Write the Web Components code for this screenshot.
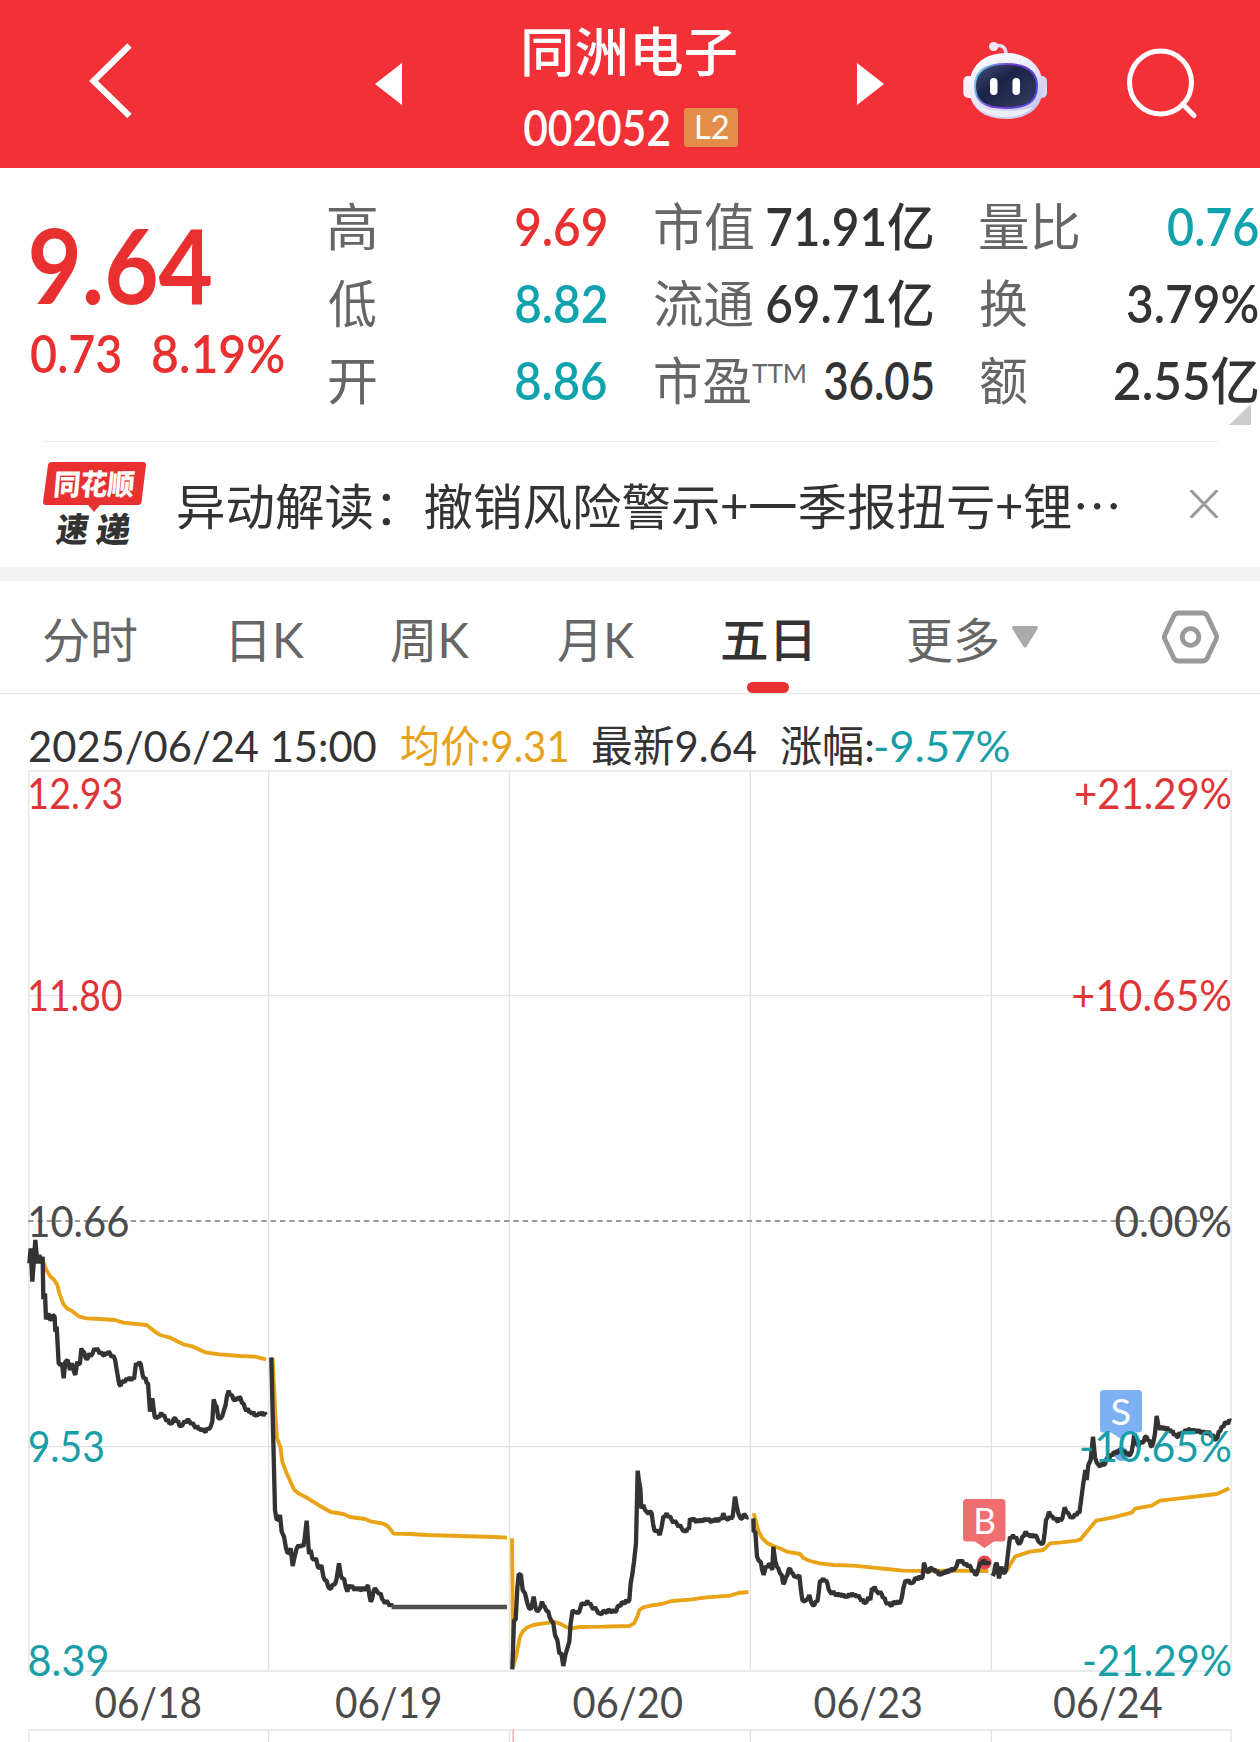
<!DOCTYPE html>
<html lang="zh-CN">
<head>
<meta charset="utf-8">
<title>同洲电子 002052</title>
<style>
    body {
        margin: 0;
        width: 1260px;
        height: 1742px;
        overflow: hidden;
        background: #fff;
        color: #333;
        font-family: Lato, "Noto Sans CJK SC", sans-serif;
    }
</style>
</head>
<body>
<stock-app></stock-app>

<script>
const FAMILY = 'Lato, "Noto Sans CJK SC", sans-serif';
const CJK_FAMILY = '"Noto Sans CJK SC", sans-serif';
const RED = '#e93030';
const TEAL = '#10a2ad';
const ctx = document.createElement('canvas').getContext('2d');

// svg <text> whose ink starts at x, ends at x + width and sits on the baseline y
function inkText (text, x, y, width, size, weight, fill, family = FAMILY) {
    ctx.font = `${weight} ${size}px ${family}`;
    const m = ctx.measureText(text);
    const scale = width / (m.actualBoundingBoxRight + m.actualBoundingBoxLeft);
    const left = x + m.actualBoundingBoxLeft * scale;
    // the unit after a figure is a step lighter than its digits
    const body = text.replace('亿', '<tspan font-weight="500">亿</tspan>');
    return `<text transform="translate(${left} ${y}) scale(${scale} 1)" font-family='${family}'
        font-size="${size}" font-weight="${weight}" fill="${fill}">${body}</text>`;
}

// One run of text fitted to a width; the bottom of the box is the baseline
class FitText extends HTMLElement {
    connectedCallback () {
        const width = +this.getAttribute('w');
        const size = +this.getAttribute('size');
        const weight = this.getAttribute('weight') || 400;
        const family = this.hasAttribute('cjk') ? CJK_FAMILY : FAMILY;
        const height = Math.round(size * 0.72);
        const root = this.attachShadow({ mode: 'open' });
        root.innerHTML = `
<style>
    :host { display: block; flex: none; width: ${width}px; height: ${height}px; }
    svg { display: block; overflow: visible; }
</style>
<svg width="${width}" height="${height}">${inkText(this.getAttribute('text'), 0, height, width, size, weight, 'currentColor', family)}</svg>`;
    }
}

class StockHeader extends HTMLElement {
    constructor () {
        super();
        this.attachShadow({ mode: 'open' }).innerHTML = `
<style>
    :host {
        display: flex;
        height: 168px;
        background: #f23037;
        color: #fff;
    }
    svg { display: block; flex: none; }
    .back { margin: 42px 0 0 86px; }
    .prev { margin: 63px 0 0 239px; }
    .title { width: 214px; margin-left: 122px; }
    .next { margin: 63px 0 0 119px; }
    .robot { margin: 40px 0 0 78px; }
    .search { margin: 46px 0 0 76px; }
</style>
<svg class="back" width="50" height="80" viewBox="86 42 50 80">
    <path d="M129.500 47 93.500 82 129.500 117.500" fill="none" stroke="#b8262c" stroke-width="6" opacity=".5"/>
    <path d="M129.500 45.500 93.500 81 129.500 116" fill="none" stroke="#fff" stroke-width="6.200"/>
</svg>
<svg class="prev" width="27" height="42"><path d="M27 0v42L0 21z" fill="#fff"/></svg>
<div class="title"><slot></slot></div>
<svg class="next" width="27" height="42"><path d="M0 0v42L27 21z" fill="#fff"/></svg>
<svg class="robot" width="86" height="82" viewBox="962 40 86 82">
    <defs>
        <linearGradient id="shell" x1="0" y1="0" x2=".7" y2="1">
            <stop offset="0" stop-color="#fff"/><stop offset=".5" stop-color="#ecebfa"/><stop offset="1" stop-color="#c3c5ec"/>
        </linearGradient>
        <linearGradient id="rim" x1="0" y1=".2" x2="1" y2=".5">
            <stop offset="0" stop-color="#69d7ef"/><stop offset=".45" stop-color="#7a3bd0"/><stop offset="1" stop-color="#5847e0"/>
        </linearGradient>
        <linearGradient id="face" x1="0" y1="0" x2="1" y2="1">
            <stop offset="0" stop-color="#46527e"/><stop offset=".4" stop-color="#1a2347"/><stop offset="1" stop-color="#373c63"/>
        </linearGradient>
    </defs>
    <path d="M994 46c8-2 12 1 12 9" fill="none" stroke="#e4dff5" stroke-width="3.500"/>
    <circle cx="993.600" cy="46.500" r="4.600" fill="#eeeafa"/>
    <rect x="963.300" y="76" width="12" height="22" rx="5" fill="#f3f2fc"/>
    <rect x="1035" y="76" width="12" height="22" rx="5" fill="#d6d6f4"/>
    <path d="M1006 53c23 0 37 14 37 34s-14 32-37 32-37-12-37-32 14-34 37-34z" fill="url(#shell)"/>
    <path d="M979 107c7 8 17 10 27 10s20-2 27-10c-8 3-17 4-27 4s-19-1-27-4z" fill="#f6f5fe" opacity=".8"/>
    <path d="M1006 64c19 0 31 6 31 22s-10 22-31 22-31-6-31-22 12-22 31-22z" fill="url(#face)" stroke="url(#rim)" stroke-width="2"/>
    <rect x="990" y="78" width="7.500" height="17" rx="3.700" fill="#fff"/>
    <rect x="1012.500" y="78" width="7.500" height="17" rx="3.700" fill="#fff"/>
</svg>
<svg class="search" width="74" height="74" viewBox="1124 46 74 74">
    <ellipse cx="1160.500" cy="82.500" rx="31" ry="31.500" fill="none" stroke="#fff" stroke-width="5"/>
    <path d="M1182.500 104 1194 115.500" stroke="#fff" stroke-width="5" stroke-linecap="round"/>
</svg>`;
    }
}

class StockTitle extends HTMLElement {
    constructor () {
        super();
        this.attachShadow({ mode: 'open' }).innerHTML = `
<style>
    :host { display: block; padding-top: 34px; }
    .code { display: flex; align-items: flex-end; margin-top: 36px; }
    .badge {
        box-sizing: border-box;
        width: 54px;
        height: 39px;
        margin: 0 0 -1px 15px;
        padding: 8px 0 0 12px;
        border-radius: 3px;
        background: #e48d49;
    }
</style>
<fit-text text="同洲电子" w="212" size="53" weight="500"></fit-text>
<div class="code">
    <fit-text text="002052" w="145" size="49" weight="600"></fit-text>
    <div class="badge"><fit-text text="L2" w="32" size="32"></fit-text></div>
</div>`;
    }
}

// label on the left, figure on the right, sharing a baseline
class QuoteItem extends HTMLElement {
    connectedCallback () {
        const a = name => this.getAttribute(name);
        this.attachShadow({ mode: 'open' }).innerHTML = `
<style>
    :host { display: flex; align-items: flex-end; justify-content: space-between; height: 38px; }
    .label { color: #666; }
    .value { color: ${a('color') || '#333'}; }
</style>
<fit-text class="label" text="${a('label')}" w="${a('lw')}" size="51"></fit-text>
<slot></slot>
<fit-text class="value" text="${a('value')}" w="${a('vw')}" size="51" weight="600"></fit-text>`;
    }
}

class QuotePanel extends HTMLElement {
    constructor () {
        super();
        this.attachShadow({ mode: 'open' }).innerHTML = `
<style>
    :host { display: block; height: 274px; overflow: hidden; }
    .cols { display: flex; height: 273px; }
    .now { width: 253px; margin-left: 31px; padding-top: 61px; color: ${RED}; }
    .diff { display: flex; justify-content: space-between; margin-top: 32px; }
    .col { display: flex; flex-direction: column; gap: 39px; padding-top: 40px; }
    .c1 { width: 277px; margin-left: 45px; }
    .c2 { width: 278px; margin-left: 49px; }
    .c3 { width: 278px; margin-left: 47px; }
    .ttm { align-self: flex-start; margin: 2px 17px 0 0; color: #666; }
    .corner { margin: 236px 0 0 -29px; }
    .line { height: 1px; margin: 0 42px; background: #ececec; }
</style>
<div class="cols">
    <div class="now">
        <fit-text text="9.64" w="180" size="104" weight="700"></fit-text>
        <div class="diff">
            <fit-text text="0.73" w="89" size="51" weight="600"></fit-text>
            <fit-text text="8.19%" w="131" size="51" weight="600"></fit-text>
        </div>
    </div>
    <div class="col c1">
        <quote-item label="高" lw="47" value="9.69" vw="90" color="${RED}"></quote-item>
        <quote-item label="低" lw="47" value="8.82" vw="90" color="${TEAL}"></quote-item>
        <quote-item label="开" lw="47" value="8.86" vw="90" color="${TEAL}"></quote-item>
    </div>
    <div class="col c2">
        <quote-item label="市值" lw="98" value="71.91亿" vw="166"></quote-item>
        <quote-item label="流通" lw="98" value="69.71亿" vw="166"></quote-item>
        <quote-item label="市盈" lw="95" value="36.05" vw="109"><fit-text class="ttm" text="TTM" w="53" size="27"></fit-text></quote-item>
    </div>
    <div class="col c3">
        <quote-item label="量比" lw="99" value="0.76" vw="90" color="${TEAL}"></quote-item>
        <quote-item label="换" lw="47" value="3.79%" vw="131"></quote-item>
        <quote-item label="额" lw="47" value="2.55亿" vw="143"></quote-item>
    </div>
    <svg class="corner" width="22" height="21"><path d="M22 0v21H0z" fill="#ccc"/></svg>
</div>
<div class="line"></div>`;
    }
}

class NewsBar extends HTMLElement {
    constructor () {
        super();
        this.attachShadow({ mode: 'open' }).innerHTML = `
<style>
    :host { display: flex; height: 125px; border-bottom: 14px solid #f4f4f4; }
    .logo { margin: 18px 0 0 42px; overflow: visible; }
    .close { margin: 48px 0 0 72px; }
</style>
<svg class="logo" width="106" height="88" viewBox="42 460 106 88">
    <path d="M52 462h91q3 0 3 3l-4.500 37q-.5 3-3.500 3h-38l-6 7-6-7H46q-3 0-3-3l5-37q.5-3 4-3z" fill="${RED}"/>
    <g transform="translate(97 0) skewX(-5)">${inkText('同花顺', 0, 495, 80, 29, 900, '#fff')}</g>
    <g transform="translate(131 0) skewX(-8)">${inkText('速', 0, 541.5, 32, 34, 900, '#333')}${inkText('递', 40, 541.5, 34, 34, 900, '#333')}</g>
</svg>
<slot></slot>
<svg class="close" width="28" height="28"><path d="M1.500 1 26.500 27M26.500 1 1.500 27" stroke="#999" stroke-width="3" stroke-linecap="round"/></svg>`;
    }
}

class TabItem extends HTMLElement {
    connectedCallback () {
        const active = this.hasAttribute('active');
        this.attachShadow({ mode: 'open' }).innerHTML = `
<style>
    :host { display: flex; flex-direction: column; align-items: center; color: ${active ? '#333' : '#666'}; }
    i { display: ${active ? 'block' : 'none'}; width: 42px; height: 11px; margin: 25px 0 0 3px; border-radius: 5.500px; background: ${RED}; }
</style>
<fit-text text="${this.getAttribute('text')}" w="${this.getAttribute('w')}" size="${active ? 47 : 48}" weight="${active ? 500 : 400}"></fit-text>
<i></i>`;
    }
}

class TabBar extends HTMLElement {
    constructor () {
        super();
        this.attachShadow({ mode: 'open' }).innerHTML = `
<style>
    :host {
        display: flex;
        align-items: flex-start;
        box-sizing: border-box;
        height: 113px;
        padding: 42px 41px 0 44px;
        border-bottom: 1px solid #e6e6e6;
    }
    .arrow { margin: 3px 0 0 14px; }
    .settings { margin: -13px 0 0 auto; }
</style>
<slot></slot>
<svg class="arrow" width="26" height="22"><path d="M2 0h22q3 0 1.500 3L15 20q-2 3-4 0L.5 3Q-1 0 2 0z" fill="#aaa"/></svg>
<svg class="settings" width="57" height="54" viewBox="1161.500 609.500 57 54">
    <path d="M1178 612.500h24q3 0 4.500 2.500l9 19q1.200 2.500 0 5l-9 19q-1.500 2.500-4.500 2.500h-24q-3 0-4.500-2.500l-9-19q-1.200-2.500 0-5l9-19q1.500-2.500 4.500-2.500z" fill="none" stroke="#999" stroke-width="4.800"/>
    <circle cx="1190" cy="636.500" r="8.300" fill="none" stroke="#999" stroke-width="4.800"/>
</svg>`;
    }
}

class InfoLine extends HTMLElement {
    constructor () {
        super();
        this.attachShadow({ mode: 'open' }).innerHTML = `
<style>
    :host { display: flex; height: 69px; box-sizing: border-box; padding: 37px 0 0 30px; }
</style>
<slot></slot>`;
    }
}

// Traced points of each day, three units to a pixel, from the day's own origin
const DAYS = [
    {
        x: 0, y: 1200,
        price: '88,190 92,145 97,245 101,190 106,120 112,190 118,165 124,190 128,170 130,298 135,280 138,358 145,340 150,360 158,345 164,350 166,395 170,380 176,490 186,490 191,535 196,485 203,480 210,510 216,490 226,525 232,485 240,490 244,445 252,455 260,478 268,460 272,468 283,445 295,452 308,465 318,458 330,460 345,478 352,520 358,555 370,545 380,535 402,538 408,490 422,492 428,525 444,550 450,635 457,595 464,650 474,650 484,638 496,655 512,670 526,655 542,678 553,663 568,663 583,678 600,685 612,693 626,688 637,665 641,598 650,620 655,655 662,655 672,630 686,572 700,598 722,595 735,625 752,635 768,645 778,638 798,645',
        avg: '128,180 138,208 150,228 163,240 172,255 178,280 190,312 202,326 215,332 238,350 260,355 300,357 345,360 370,368 440,375 465,395 480,405 510,413 550,433 580,440 615,457 660,463 720,468 765,470 798,478'
    },
    {
        x: 260, y: 1330,
        price: '34,82 45,540 50,570 60,555 65,605 72,620 78,655 83,670 92,655 98,708 104,680 110,655 116,645 130,650 134,625 140,572 147,672 152,660 157,685 168,685 174,712 184,705 190,740 200,752 208,775 222,765 230,745 237,700 243,738 252,745 262,785 268,765 280,775 300,778 318,775 324,765 332,815 345,775 352,785 362,790 370,812 385,820 397,830',
        flat: '395,831 741,831',
        avg: '38,85 46,250 51,325 61,350 67,395 80,430 103,480 115,490 135,500 175,525 212,546 250,552 270,561 315,567 335,575 370,581 385,590 401,611 450,612 500,615 600,618 700,621 741,623'
    },
    {
        x: 500, y: 1420,
        price: '37,748 42,600 47,600 52,505 56,462 63,465 68,510 75,520 82,550 92,568 96,555 101,530 107,565 115,572 126,545 134,560 145,575 153,600 160,610 165,645 172,660 178,700 184,700 190,738 196,705 202,685 208,665 212,610 218,570 228,575 238,575 245,550 252,552 262,542 275,560 290,570 300,580 315,575 330,572 345,575 357,557 370,548 388,540 392,490 402,425 408,370 413,152 421,205 424,265 430,255 440,275 455,280 463,330 472,330 479,345 485,320 490,290 500,280 515,300 530,310 545,325 555,332 567,328 570,295 585,302 605,302 615,295 630,303 650,300 665,298 670,280 680,297 698,290 705,230 712,268 722,295 735,285 745,291',
        avg: '36,355 38,560 39,740 48,710 55,675 60,650 68,635 80,623 100,615 130,610 165,606 185,613 200,622 215,625 240,621 310,620 388,618 402,610 412,590 418,570 430,562 455,556 485,552 515,543 570,539 620,532 650,530 690,527 715,519 745,516'
    },
    {
        x: 740, y: 1460,
        price: '40,175 41,215 46,215 51,290 62,305 71,345 78,318 92,315 97,330 100,260 106,305 115,325 125,345 130,372 138,350 150,325 158,340 168,350 178,345 187,420 198,420 208,405 218,435 232,425 240,362 250,355 262,370 270,395 285,402 318,408 345,402 360,415 376,428 385,412 391,420 396,385 404,380 412,395 425,402 437,425 450,435 465,428 482,425 490,385 497,360 515,368 530,355 548,350 552,308 562,335 575,325 600,342 620,335 645,325 655,300 670,308 692,322 706,345 714,330 720,308 735,305 748,314',
        avg: '41,160 48,185 55,212 65,232 80,248 100,258 125,267 140,275 180,282 190,294 210,303 240,310 280,315 340,317 400,323 440,327 490,332 560,333 620,332 745,333'
    },
    {
        x: 960, y: 1370,
        price: '98,618 110,578 117,625 124,590 130,608 138,600 144,550 150,500 168,500 178,522 187,500 197,485 208,495 230,500 240,518 250,518 258,450 267,425 278,440 290,452 307,445 314,412 325,430 336,442 345,432 358,430 365,378 370,340 376,300 380,330 385,285 392,270 399,200 405,262 416,285 430,285 445,262 465,248 485,240 505,255 515,245 523,190 532,225 545,218 560,200 576,230 585,190 590,138 596,172 630,178 650,200 668,185 690,180 720,185 750,190 768,208 785,170 800,158 812,153',
        avg: '110,600 140,602 150,585 165,560 185,553 210,545 250,540 270,520 305,517 350,512 362,508 385,480 408,452 460,442 515,428 525,416 575,407 600,392 660,385 720,378 770,372 808,355'
    }
];

function ticks (points) {
    const list = points.split(' ').map(p => p.split(',').map(Number));
    const out = [list[0]];
    for (let i = 1; i < list.length; i++) {
        const [x0, y0] = list[i - 1];
        const [x1, y1] = list[i];
        const n = Math.floor((x1 - x0) / 4);
        for (let k = 1; k < n; k++) {
            out.push([x0 + (x1 - x0) * k / n, y0 + (y1 - y0) * k / n + (k % 2 ? 5 : -5)]);
        }
        out.push([x1, y1]);
    }
    return out.map(p => p.join(',')).join(' ');
}

class PriceChart extends HTMLElement {
    constructor () {
        super();
        const line = (x1, y1, x2, y2, color = '#e2e2e2', w = 1.3) =>
            `<path d="M${x1} ${y1}L${x2} ${y2}" stroke="${color}" stroke-width="${w}"/>`;
        const layer = (name, color, w) => DAYS.map(d => d[name] ? `
            <polyline transform="translate(${d.x} ${d.y}) scale(.33333)" points="${name === 'price' ? ticks(d[name]) : d[name]}"
                fill="none" stroke="${color}" stroke-width="${w}" stroke-linejoin="bevel"/>` : '').join('');
        const label = (text, x, y, width, color) => inkText(text, x, y, width, 42.5, 400, color);
        const red = '#dd3538';
        const teal = '#199ea8';
        const gray = '#4b4b4b';

        this.attachShadow({ mode: 'open' }).innerHTML = `
<style>
    :host { display: block; height: 979px; }
    svg { display: block; }
</style>
<svg width="1260" height="979" viewBox="0 763 1260 979">
    ${[268.7, 509.4, 750.3, 991.3].map(x => line(x, 771, x, 1671) + line(x, 1730, x, 1742)).join('')}
    ${[28.8, 1231].map(x => line(x, 771, x, 1671, '#eaeaea', 1.8) + line(x, 1730, x, 1742, '#eaeaea', 1.8)).join('')}
    ${[995.6, 1446.6].map(y => line(28, y, 1231, y)).join('')}
    ${[771, 1671, 1730].map(y => line(28, y, 1232, y, '#eaeaea', 2)).join('')}
    ${line(513.2, 1730, 513.2, 1742, '#f3b4b4', 1.6)}
    <path d="M28 1221H1231" stroke="#999" stroke-width="1.800" stroke-dasharray="5.400 3.933"/>

    ${layer('avg', '#e8a317', 11.5)}
    <circle cx="984.500" cy="1562.500" r="7" fill="#e8484d"/>
    <circle cx="1121.500" cy="1454" r="7" fill="#6fa8f0"/>
    ${layer('price', '#333', 13)}
    ${layer('flat', '#505050', 13)}

    <path d="M966.500 1499H1002q3.500 0 3.500 3.500V1538q0 3.500-3.500 3.500H994L984.500 1548 975 1541.500H966.500q-3.500 0-3.500-3.500V1502.500q0-3.500 3.500-3.500z" fill="#f06e70"/>
    ${inkText('B', 976, 1534, 19, 37, 400, '#fff')}
    <path d="M1103.500 1390H1138.500q3.500 0 3.500 3.500V1429q0 3.500-3.500 3.500H1130L1121 1439 1111 1432.500H1103.500q-3.500 0-3.500-3.500V1393.500q0-3.500 3.500-3.500z" fill="#7eb1f3"/>
    ${inkText('S', 1111.5, 1425, 18.5, 37, 400, '#fff')}

    ${label('12.93', 30, 808.5, 92, red)}
    ${label('11.80', 30, 1010.5, 92, red)}
    ${label('10.66', 30, 1236.5, 98, gray)}
    ${label('9.53', 29.5, 1461.5, 74, teal)}
    ${label('8.39', 29.5, 1676, 77.5, teal)}
    ${label('+21.29%', 1076, 808.5, 155, red)}
    ${label('+10.65%', 1073.5, 1010.5, 157.5, red)}
    ${label('0.00%', 1115.5, 1236.5, 115.5, gray)}
    ${label('-10.65%', 1081, 1462, 150, teal)}
    ${label('-21.29%', 1084, 1675.5, 147, teal)}

    ${label('06/18', 95.5, 1717.5, 105, gray)}
    ${label('06/19', 336, 1717.5, 104, gray)}
    ${label('06/20', 573.5, 1717.5, 109, gray)}
    ${label('06/23', 814.5, 1717.5, 107, gray)}
    ${label('06/24', 1054, 1717.5, 108, gray)}
</svg>`;
    }
}

class StockApp extends HTMLElement {
    constructor () {
        super();
        this.attachShadow({ mode: 'open' }).innerHTML = `
<style>
    :host { display: block; }
    .news { margin: 48px 0 0 30px; }
    .avg { margin-left: 25px; color: #e6a21a; }
    .last { margin-left: 26px; }
    .rise { margin-left: 25px; }
    .pct { margin-left: 2px; color: #199ea8; }
</style>
<stock-header><stock-title></stock-title></stock-header>
<quote-panel></quote-panel>
<news-bar><fit-text class="news" text="异动解读：撤销风险警示+一季报扭亏+锂…" w="940" size="49" cjk></fit-text></news-bar>
<tab-bar>
    <tab-item text="分时" w="93"></tab-item>
    <tab-item text="日K" w="72" style="margin-left: 95px"></tab-item>
    <tab-item text="周K" w="78" style="margin-left: 87px"></tab-item>
    <tab-item text="月K" w="76" style="margin-left: 89px"></tab-item>
    <tab-item text="五日" w="88" style="margin-left: 88px" active></tab-item>
    <tab-item text="更多" w="90" style="margin-left: 98px"></tab-item>
</tab-bar>
<info-line>
    <fit-text text="2025/06/24 15:00" w="346" size="43"></fit-text>
    <fit-text class="avg" text="均价:9.31" w="166" size="43"></fit-text>
    <fit-text class="last" text="最新9.64" w="163" size="43"></fit-text>
    <fit-text class="rise" text="涨幅:" w="92" size="43"></fit-text>
    <fit-text class="pct" text="-9.57%" w="134" size="43"></fit-text>
</info-line>
<price-chart></price-chart>`;
    }
}

customElements.define('fit-text', FitText);
customElements.define('stock-title', StockTitle);
customElements.define('stock-header', StockHeader);
customElements.define('quote-item', QuoteItem);
customElements.define('quote-panel', QuotePanel);
customElements.define('news-bar', NewsBar);
customElements.define('tab-item', TabItem);
customElements.define('tab-bar', TabBar);
customElements.define('info-line', InfoLine);
customElements.define('price-chart', PriceChart);
customElements.define('stock-app', StockApp);
</script>
</body>
</html>
